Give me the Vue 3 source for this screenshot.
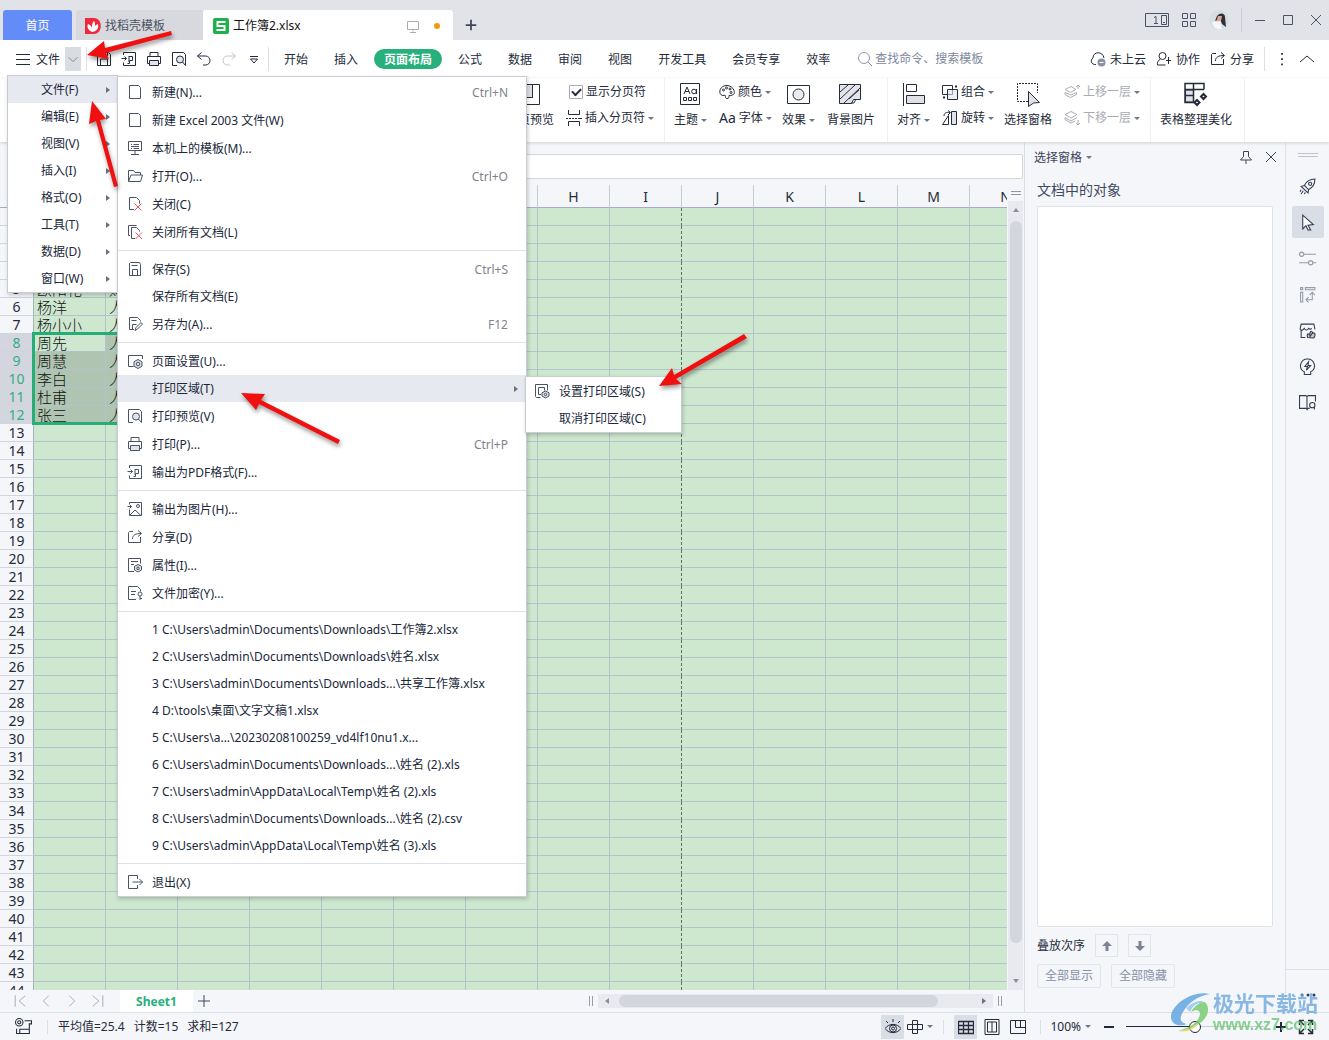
<script setup>
import { h, ref } from 'vue'

const icons = {
  page: '<path d="M2.500 1.500h9l2 2v11h-11z"/>',
  template: '<path d="M1.500 1.500h13v9h-13zM8 10.500v3.500M4 14.500h8M4 4.500h1M6.500 4.500h5.500M4 6.500h8M4 8.500h1M6.500 8.500h5.500"/>',
  folder: '<path d="M1.500 13.500v-11h5l1.500 2h5.500v2.500M1.500 13.500l2.500-6.500h11.500l-2 6.500z"/>',
  close: '<path d="M7 13.500H2.500v-12h7l3 3v3"/><path stroke="#e05a5a" d="M7.500 7.500l7 7M14.500 7.500l-7 7"/>',
  closeAll: '<path d="M3 11.500H1.500v-10h8M8 14.500H4.500v-11h5l3 3v1"/><path stroke="#e05a5a" d="M8.500 8.500l6.500 6.500M15 8.500l-6.500 6.500"/>',
  save: '<path d="M2.500 14.500v-12l1-1h9l1 2v11zM4.500 4.500h6M5.500 14.500v-6h5v6"/>',
  saveAs: '<path d="M7 13.500H2.500v-12h8l3 3v1M4.500 4.500h5M5.500 13.500v-5h4M8 14.500l1-3 5-5 1.500 1.500-5 5z"/>',
  quickSave: '<path d="M1.500 14.500v-13h11l2 2v11zM4.500 1.500v3h7v-3M4.500 14.500v-6.500h7v6.500"/>',
  pageSetup: '<path d="M6.500 13.500h-5v-11h14v3.500"/><path fill="#dfe4ee" d="M11 6.500l4 2.200v4.600L11 15.500l-4-2.200V8.700z"/><circle cx="11" cy="11" r="1.800"/>',
  preview: '<path d="M6 14.500H1.500v-13h11l2 2v11"/><circle cx="9" cy="8.500" r="3.500" fill="#dfe4ee"/><path d="M11.500 11l3 3.500"/>',
  print: '<path d="M4 5.500v-4h8v4M3.500 12.500h-2v-7h13v7h-2"/><path fill="#dfe4ee" d="M3.500 9.500h9v5h-9z"/>',
  pdf: '<path d="M2.500 4v-2.500h12v13h-12v-3M.5 7.500h5M3.500 5.500l2 2-2 2M7.500 5.500h4v4h-3v3h-2M8 6v5"/>',
  image: '<path d="M2.500 3v-1.500h12v13h-12v-6M.5 5.500h4M2.500 3.500l2 2-2 2M3 14l5-5 6 5.500"/><circle cx="11" cy="5" r="1.500"/>',
  share: '<path d="M6 2.500H2.500l-1 1v10h12V8M5.500 10c0-4 3-5.500 8.500-5.500M11 1.500l3.500 3-3.500 3"/>',
  props: '<path d="M7 14.500H1.500v-13h12v5M4 4.500h7M4 7.500h3"/><path fill="#dfe4ee" d="M11 7.500l3.500 1.800v3.700L11 15l-3.500-2V9.300z"/><circle cx="11" cy="11.300" r="1.300"/>',
  lock: '<path d="M9 14.500H1.500v-13h9l3 3v2M4 6.500h5M4 9.500h4"/><circle cx="13" cy="9" r="2"/><path d="M13 11v4M13 13.500h2"/>',
  exit: '<path d="M10.500 5V1.500h-9v13h9V11M5.500 8h10M12.500 5l3 3-3 3"/>',
  area: '<path d="M6.500 14.500h-4l-1-1v-12h12v6"/><path d="M4.500 11.500v-7h6v3M4.500 11.500h2.500"/><path fill="#dfe4ee" d="M11.500 8l3.500 1.800v3.200l-3.500 2-3.500-2V9.800z"/><circle cx="11.500" cy="11.500" r="1.200"/>',
  undo: '<path d="M5.500 1.500l-4 3.500 4 3.500M1.500 5h8c6 0 6 9 0 9H7"/>',
  redo: '<path d="M10.500 1.500l4 3.500-4 3.500M14.500 5h-8c-6 0-6 9 0 9H9"/>',
  more: '<path d="M4 5.500h8M4.500 8h7l-3.500 4z"/>',
  menu: '<path d="M1 3.500h14M1 8.500h14M1 13.500h14"/>',
  down: '<path d="M3 6l5 5 5-5"/>',
  up: '<path d="M1 11l7-6 7 6"/>',
  plus: '<path d="M8 2v12M2 8h12"/>',
  search: '<circle cx="7" cy="7" r="5.500"/><path d="M11 11l4 4"/>',
  cloud: '<path d="M6 13.500C1 14 0 9 3 7c0-7 10-7 11 0"/><circle cx="11.500" cy="11.500" r="4" fill="#8b91a3" stroke="none"/><path stroke="#fff" d="M9.500 11.500h4"/>',
  people: '<circle cx="6.500" cy="5" r="3.500"/><path d="M4 8.500c-2 1-3 3-2.500 5.500h8M12.500 6v7M10 9.500h5"/>',
  dots: '<path stroke-width="2" d="M8 1v2M8 7v2M8 13v2"/>',
  apps: '<path d="M1.500 1.500h5v5h-5zM9.500 1.500h5v5h-5zM1.500 9.500h5v5h-5zM9.500 9.500h5v5h-5z"/>',
  min: '<path d="M3 8.500h10"/>',
  max: '<path d="M3.500 3.500h9v9h-9z"/>',
  x: '<path d="M3 3l10 10M13 3L3 13"/>',
  screen: '<path d="M2.500 3.500h11v8h-11zM8 11.500v2M5 14.500h6"/>',
  pin: '<path d="M5.500 2.500h5v5l3 3.500h-11l3-3.500zM8 11v4"/>',
  first: '<path d="M2.500 1.500v13M14 2L7 8l7 6"/>',
  prev: '<path d="M11 2L5 8l6 6"/>',
  next: '<path d="M5 2l6 6-6 6"/>',
  last: '<path d="M13.500 1.500v13M2 2l7 6-7 6"/>',
  break: '<path d="M2.500 0v4.500h11V0M2.500 16v-4.500h11V16M0 8.500h2M3 8.500h2M6 8.500h2M9 8.500h2M12 8.500h4"/>',
  palette: '<path d="M8 1.500c-9 0-9 11-3 10 3-1 0 3 3 3 2 0 2-1 2-3 5 0 6-2 5-5-1-3-4-5-7-5z"/><circle cx="4.500" cy="6" r="1"/><circle cx="7.500" cy="4" r="1"/><circle cx="11" cy="5" r="1"/><circle cx="12" cy="8.500" r="1"/>',
  group: '<path d="M.5 1.500h10v9H.5z"/><path fill="#dfe4ee" fill-opacity=".6" d="M5.500 5.500h10v10h-10z"/><path stroke-width="2" d="M13 2.500h2M1 13.500h2"/>',
  rotate: '<path d="M.5 14.500l6-9v9zM2 6c0-3 2-4 6-3.500M6 .5l2.500 2L6 5"/><path fill="#dfe4ee" d="M9.500 1.500h5v13h-5z"/>',
  layerUp: '<path d="M1 5.500l6-3 5 3-5.500 3zM1 8.500v2l5.500 3 6-3v-2L7 11zM14 5V1M12 3l2-2 2 2"/>',
  layerDown: '<path d="M1 4.500l6-3 6 3-6 3.500zM1 7.500v2l6 3.500 4-2M13 7.500L7 11 1 7.500M14 10v5M12 13l2 2 2-2"/>',
  rocket: '<path d="M5 7c2-4 5-6 10-6 0 5-2 8-6 10zM5 7l-3 1 6.500 6L9 11M2 11l-1 2M4 12l-2 3M6 13.500L5 15"/><circle cx="10.500" cy="5.500" r="1.500"/>',
  pointer: '<path fill="#fff" d="M3.500 1l10 9-5 .5L11 15H8.500l-2-4-3 3z"/>',
  sliders: '<circle cx="2.500" cy="4" r="2"/><path d="M4.500 4H16M0 12h9M13 12h3"/><circle cx="11" cy="12" r="2"/>',
  transfer: '<path d="M1.500 1.500h2v2h-2zM6 1.500h9v2H6zM1.500 6h2v9h-2zM12.500 7v6h-6M10 8.500L12.500 6 15 8.500M9 10.500L6.500 13 9 15.500"/>',
  store: '<path d="M2 7v7.500h4M1 7l1-5h12l1 5M1 7c2 2 3 0 4-1 1 2 3 2 4 0 1 1 2 1 3 0"/><path fill="currentColor" fill-opacity=".25" d="M8 14.500c-1-4 1-4 2-2 0-4 2-5 3-2 2-1 3 1 1 4.500zM10 14l3-4"/>',
  bulb: '<path d="M5 13c-6-3-4-12 3-12s9 9 3 12v2.500H5zM9 3.500L5.500 8H8l-1 3.500L11 7H8.500z"/>',
  book: '<path d="M.5 1.500h6l1 1v12l-1-1h-6zM7.500 2.500l1-1h7V7M7.500 14.500l1-1H10"/><circle cx="12.500" cy="10.500" r="2.500"/><path d="M14.500 12v2.500"/>',
  macro: '<circle cx="4" cy="4" r="3.500"/><circle cx="4" cy="4" r="1.500"/><path d="M9 2.500h6.500v3h-2v9h-9v-4h9M1.500 10v4.500h3"/>',
  eye: '<path d="M0 9.500C4 4 12 4 16 9.500c-4 5.500-12 5.500-16 0zM8 0v3M1 2l2 2M15 2l-2 2"/><circle cx="8" cy="9.500" r="3.500"/><circle cx="8" cy="9.500" r="1.500"/>',
  cross: '<path d="M5.500 1.500h5v13h-5zM.5 5.500h15v5H.5z"/>',
  grid: '<path stroke-width="1.300" d="M.5 2.500h15v12H.5zM.5 6.500h15M.5 10.500h15M5.500 2.500v12M10.500 2.500v12"/>',
  layout: '<path d="M1 .5h14v15H1zM3.500 3h9v10h-9zM8 3v10"/>',
  split: '<path d="M.5 1.500h15v13H.5zM5.500 1.500v7h10M10.500 1.500v7"/>',
  full: '<path stroke-width="1.500" d="M6 1.500H1.500V6M1.500 1.500L6 6M10 1.500h4.500V6M14.500 1.500L10 6M1.500 10v4.500H6M1.500 14.500L6 10M14.500 10v4.500H10M14.500 14.500L10 10"/>',
  arrowUp: '<path fill="currentColor" stroke="none" d="M8 3l5 5H9.500v5h-3V8H3z"/>',
  arrowDown: '<path fill="currentColor" stroke="none" d="M8 13L3 8h3.500V3h3v5H13z"/>',
  bigPreview: '<path d="M1.500 2.500h20v20h-20z"/><path fill="#dfe1e6" d="M1.500 2.500h13v13h-13z"/><path d="M14.500 15.500v-13"/>',
  bigTheme: '<path d="M2.500 1.500h19v21h-19zM5.500 15.500h3v3h-3zM10.500 15.500h3v3h-3zM15.500 15.500h3v3h-3zM6 12l3-7 3 7M7 9.500h4"/><circle cx="16" cy="9.500" r="2.300"/><path d="M18.500 7v5"/>',
  bigEffect: '<path d="M1.500 3.500h22v18h-22z"/><circle cx="12.500" cy="12.500" r="5.500" fill="#e8ebf0"/>',
  bigBack: '<path fill="#e3e5ea" d="M1.500 2.500h21v15h-7l-2 4h-12z"/><path d="M2 10l8-7M2 17L17 3M6 21L22 6M13 21h3l2-4M11 17l10-9"/>',
  bigAlign: '<path d="M2.500 1v23M5.500 2.500h10v7h-10z"/><path fill="#dfe1e6" d="M5.500 13.500h18v8h-18z"/>',
  bigSelect: '<path stroke-dasharray="2 1" d="M13 19.500H2.500v-18h20V11"/><path fill="#dfe1e6" d="M13.500 9.500l11 11-6 .5-5 3.500z"/>',
  bigTable: '<path fill="#dfe1e6" d="M2.500 8h8v12h-8z"/><path stroke-width="1.500" d="M21 7.500v-6H2v19h8.500v-19M2 7.500h19M2 13.500h8.500"/><path stroke-width="2" d="M14 18l2.500 2.500L14 23l-2.500-2.500zM20.500 12l2.500 2.500-2.500 2.500-2.500-2.500z"/>',
}
const Ico = (p) => h('svg', {
  width: p.s || 16, height: p.s || 16, viewBox: p.s > 24 ? '0 0 25 25' : '0 0 16 16',
  fill: 'none', stroke: 'currentColor', 'aria-hidden': 'true', innerHTML: icons[p.n],
})
Ico.props = ['n', 's']

const mainMenu = ['文件(F)', '编辑(E)', '视图(V)', '插入(I)', '格式(O)', '工具(T)', '数据(D)', '窗口(W)']
const fileMenu = [
  [
    { t: '新建(N)...', i: 'page', k: 'Ctrl+N' },
    { t: '新建 Excel 2003 文件(W)', i: 'page' },
    { t: '本机上的模板(M)...', i: 'template' },
    { t: '打开(O)...', i: 'folder', k: 'Ctrl+O' },
    { t: '关闭(C)', i: 'close' },
    { t: '关闭所有文档(L)', i: 'closeAll' },
  ],
  [
    { t: '保存(S)', i: 'save', k: 'Ctrl+S' },
    { t: '保存所有文档(E)' },
    { t: '另存为(A)...', i: 'saveAs', k: 'F12' },
  ],
  [
    { t: '页面设置(U)...', i: 'pageSetup' },
    { t: '打印区域(T)', sub: true },
    { t: '打印预览(V)', i: 'preview' },
    { t: '打印(P)...', i: 'print', k: 'Ctrl+P' },
    { t: '输出为PDF格式(F)...', i: 'pdf' },
  ],
  [
    { t: '输出为图片(H)...', i: 'image' },
    { t: '分享(D)', i: 'share' },
    { t: '属性(I)...', i: 'props' },
    { t: '文件加密(Y)...', i: 'lock' },
  ],
  [
    '1 C:\\Users\\admin\\Documents\\Downloads\\工作簿2.xlsx',
    '2 C:\\Users\\admin\\Documents\\Downloads\\姓名.xlsx',
    '3 C:\\Users\\admin\\Documents\\Downloads...\\共享工作簿.xlsx',
    '4 D:\\tools\\桌面\\文字文稿1.xlsx',
    '5 C:\\Users\\a...\\20230208100259_vd4lf10nu1.x...',
    '6 C:\\Users\\admin\\Documents\\Downloads...\\姓名 (2).xls',
    '7 C:\\Users\\admin\\AppData\\Local\\Temp\\姓名 (2).xls',
    '8 C:\\Users\\admin\\Documents\\Downloads...\\姓名 (2).csv',
    '9 C:\\Users\\admin\\AppData\\Local\\Temp\\姓名 (3).xls',
  ].map((t) => ({ t })),
  [{ t: '退出(X)', i: 'exit' }],
]
const ribbonTabs = ['开始', '插入', '页面布局', '公式', '数据', '审阅', '视图', '开发工具', '会员专享', '效率']
const columns = 'ABCDEFGHIJKLMN'.split('')
const names = { 5: ['欧阳花', '财务'], 6: ['杨洋', '人事'], 7: ['杨小小', '人事'], 8: ['周先', '人事'], 9: ['周慧', '人事'], 10: ['李白', '人事'], 11: ['杜甫', '人事'], 12: ['张三', '人事'] }
const picked = (r) => r >= 8 && r <= 12
const rail = ['rocket', 'pointer', 'sliders', 'transfer', 'store', 'bulb', 'book']
const zoom = ref(50)
const breaks = ref(true)
</script>

<template>
  <div class="app">
    <header class="titlebar">
      <button class="tab home">首页</button>
      <button class="tab docer">
        <svg width="16" height="16" viewBox="0 0 16 16" aria-hidden="true"><path fill="#f0283c" d="M0 0h9c9 0 9 16 0 16H0z" /><path fill="#fff" d="M7.500 14C2 12 2 8 3 6c3 1 4 3 4 5 0-4 0-6 2-8 2 3 1 6 0 8 0-2 1-4 4-5 1 4-1 7-5.500 8z" /></svg>
        <span>找稻壳模板</span>
      </button>
      <button class="tab workbook">
        <svg width="16" height="16" viewBox="0 0 16 16" aria-hidden="true"><rect width="16" height="16" rx="2" fill="#1fb14c" /><path fill="none" stroke="#fff" stroke-width="2" d="M12.500 4H4.500v4h7v4H3.500" /></svg>
        <span>工作簿2.xlsx</span>
        <Ico n="screen" class="screen" /><i class="dirty"></i>
      </button>
      <button class="ib newtab" aria-label="新建标签"><Ico n="plus" s="14" /></button>
      <div class="window">
        <svg width="24" height="16" viewBox="0 0 24 16" fill="none" stroke="currentColor" aria-hidden="true"><path d="M.5 1.500h23v13H.5zM16.500 3.500h5v9h-5zM18 10.500h2M9 5.500l2-1v7M9 11.500h4" /></svg>
        <Ico n="apps" />
        <svg class="avatar" width="20" height="20" viewBox="0 0 20 20" aria-hidden="true"><circle cx="10" cy="10" r="10" fill="#d5dfe1" /><path fill="#343039" d="M8 6c3-4 8-3 8 1l1 10-4-3-2-5-5 2z" /><path fill="#d8a89a" d="M9 6h4l-1 5-5 2z" /><path fill="#f4f7f7" d="M3 12l8-1 2 8c-6 1-9-2-10-7z" /></svg>
        <i class="vline"></i>
        <button class="ib" aria-label="最小化"><Ico n="min" /></button>
        <button class="ib" aria-label="最大化"><Ico n="max" /></button>
        <button class="ib" aria-label="关闭"><Ico n="x" /></button>
      </div>
    </header>

    <nav class="menubar">
      <button class="ib file"><Ico n="menu" /><span>文件</span></button>
      <button class="ib drop" aria-label="展开菜单"><Ico n="down" s="14" /></button>
      <i class="vline"></i>
      <div class="quick">
        <button v-for="n in ['quickSave', 'pdf', 'print', 'preview', 'undo', 'redo', 'more']" :key="n" class="ib" :class="n" :aria-label="n"><Ico :n="n" /></button>
      </div>
      <i class="vline"></i>
      <div class="tabs">
        <button v-for="t in ribbonTabs" :key="t" :class="{ on: t === '页面布局' }">{{ t }}</button>
      </div>
      <label class="search"><Ico n="search" /><input type="text" placeholder="查找命令、搜索模板" aria-label="查找命令" /></label>
      <div class="account">
        <button class="ib"><Ico n="cloud" /><span>未上云</span></button>
        <button class="ib"><Ico n="people" /><span>协作</span></button>
        <button class="ib"><Ico n="share" /><span>分享</span></button>
        <i class="vline"></i>
        <button class="ib" aria-label="更多"><Ico n="dots" s="14" /></button>
        <button class="ib" aria-label="收起功能区"><Ico n="up" /></button>
      </div>
    </nav>

    <section class="ribbon">
      <button class="big"><Ico n="bigPreview" s="25" /><span>分页预览</span></button>
      <div class="stack">
        <label class="row"><input v-model="breaks" type="checkbox" />显示分页符</label>
        <button class="row"><Ico n="break" />插入分页符<i class="caret"></i></button>
      </div>
      <i class="sep"></i>
      <button class="big"><Ico n="bigTheme" s="25" /><span>主题<i class="caret"></i></span></button>
      <div class="stack">
        <button class="row"><Ico n="palette" />颜色<i class="caret"></i></button>
        <button class="row"><b>Aa</b>字体<i class="caret"></i></button>
      </div>
      <button class="big"><Ico n="bigEffect" s="25" /><span>效果<i class="caret"></i></span></button>
      <button class="big"><Ico n="bigBack" s="25" /><span>背景图片</span></button>
      <i class="sep"></i>
      <button class="big"><Ico n="bigAlign" s="25" /><span>对齐<i class="caret"></i></span></button>
      <div class="stack">
        <button class="row"><Ico n="group" />组合<i class="caret"></i></button>
        <button class="row"><Ico n="rotate" />旋转<i class="caret"></i></button>
      </div>
      <button class="big"><Ico n="bigSelect" s="25" /><span>选择窗格</span></button>
      <div class="stack off">
        <button class="row"><Ico n="layerUp" />上移一层<i class="caret"></i></button>
        <button class="row"><Ico n="layerDown" />下移一层<i class="caret"></i></button>
      </div>
      <i class="sep"></i>
      <button class="big"><Ico n="bigTable" s="25" /><span>表格整理美化</span></button>
      <i class="sep"></i>
    </section>

    <main class="body">
      <section class="sheet">
        <div class="formula"><input type="text" aria-label="编辑栏" /></div>
        <div class="canvas">
          <div class="gridwrap">
            <table>
              <thead>
                <tr><th class="corner"></th><th v-for="c in columns" :key="c">{{ c }}</th></tr>
              </thead>
              <tbody>
                <tr v-for="r in 44" :key="r" :class="{ picked: picked(r) }">
                  <th>{{ r }}</th>
                  <td v-for="(c, i) in columns" :key="c" :class="{ shade: picked(r) && i < 3 && !(r === 8 && i === 0), pagebreak: c === 'I' }">{{ names[r]?.[i] }}<i v-if="r === 8 && i === 0" class="selection"></i></td>
                </tr>
              </tbody>
            </table>
          </div>
          <div class="vscroll">
            <i class="grip"></i>
            <div class="vtrack"><i class="tri t-up"></i><i class="vthumb"></i><i class="tri t-down"></i></div>
          </div>
        </div>
        <div class="sheetbar">
          <div class="pager">
            <button v-for="n in ['first', 'prev', 'next', 'last']" :key="n" class="ib" :aria-label="n"><Ico :n="n" s="14" /></button>
          </div>
          <button class="sheettab">Sheet1</button>
          <button class="ib addsheet" aria-label="新建工作表"><Ico n="plus" /></button>
          <div class="hscroll">
            <i class="bars"></i>
            <div class="htrack"><i class="tri t-left"></i><i class="hthumb"></i><i class="tri t-right"></i></div>
            <i class="bars"></i>
          </div>
        </div>
      </section>

      <aside class="pane">
        <div class="panehead">
          <button class="ib"><span>选择窗格</span><i class="caret"></i></button>
          <button class="ib pinbtn" aria-label="固定"><Ico n="pin" /></button>
          <button class="ib" aria-label="关闭窗格"><Ico n="x" /></button>
        </div>
        <h2>文档中的对象</h2>
        <div class="objects"></div>
        <div class="order">
          <span>叠放次序</span>
          <button aria-label="上移"><Ico n="arrowUp" /></button>
          <button aria-label="下移"><Ico n="arrowDown" /></button>
        </div>
        <div class="showhide"><button>全部显示</button><button>全部隐藏</button></div>
      </aside>

      <aside class="rail">
        <i class="grip"></i>
        <button v-for="n in rail" :key="n" :class="['ib', n]" :aria-label="n"><Ico :n="n" s="17" /></button>
        <div class="railend">
          <svg width="16" height="4" viewBox="0 0 16 4" fill="currentColor" aria-hidden="true"><circle cx="2" cy="2" r="1.500" /><circle cx="8" cy="2" r="1.500" /><circle cx="14" cy="2" r="1.500" /></svg>
        </div>
      </aside>
    </main>

    <footer class="status">
      <Ico n="macro" s="17" />
      <i class="vline"></i>
      <span class="sums"><span>平均值=25.4</span><span>计数=15</span><span>求和=127</span></span>
      <div class="views">
        <button class="ib on" aria-label="护眼模式"><Ico n="eye" /></button>
        <button class="ib" aria-label="阅读模式"><Ico n="cross" s="16" /><i class="caret"></i></button>
        <i class="vline"></i>
        <button class="ib on" aria-label="普通视图"><Ico n="grid" s="16" /></button>
        <button class="ib" aria-label="页面布局"><Ico n="layout" s="16" /></button>
        <button class="ib" aria-label="分页预览"><Ico n="split" /></button>
        <i class="vline"></i>
      </div>
      <div class="zoom">
        <button class="ib pct">100%<i class="caret"></i></button>
        <button class="ib" aria-label="缩小"><svg width="12" height="12" aria-hidden="true"><path stroke="#20283a" stroke-width="2" d="M1 6h10" /></svg></button>
        <input v-model="zoom" type="range" min="0" max="100" aria-label="缩放" />
        <button class="ib" aria-label="放大"><svg width="12" height="12" aria-hidden="true"><path stroke="#20283a" stroke-width="2" d="M1 6h10M6 1v10" /></svg></button>
        <button class="ib fs" aria-label="全屏"><Ico n="full" /></button>
      </div>
    </footer>

    <ul class="pop mainmenu">
      <li v-for="(m, i) in mainMenu" :key="m"><button :class="{ hot: i === 0 }">{{ m }}<i class="tri t-right"></i></button></li>
    </ul>

    <div class="pop filemenu">
      <ul v-for="(g, i) in fileMenu" :key="i">
        <li v-for="m in g" :key="m.t">
          <button :class="{ hot: m.sub, tall: m.i }">
            <span class="mi"><Ico v-if="m.i" :n="m.i" /></span><span class="mt">{{ m.t }}</span>
            <kbd v-if="m.k">{{ m.k }}</kbd><i v-if="m.sub" class="tri t-right"></i>
          </button>
        </li>
      </ul>
    </div>

    <ul class="pop submenu">
      <li><button class="tall"><span class="mi"><Ico n="area" /></span><span class="mt">设置打印区域(S)</span></button></li>
      <li><button><span class="mi"></span><span class="mt">取消打印区域(C)</span></button></li>
    </ul>

    <svg class="marks" width="760" height="460" aria-hidden="true">
      <g fill="#f01010">
        <path d="M87 55L104 41 105 48 171 31 172 35 106 53 109 59z" />
        <path d="M92 101L106 119 100 120 118 186 114 187 96 121 89 124z" />
        <path d="M659 386L672 368 674 375 744 334 747 338 676 379 682 384z" />
        <path d="M241 393L265 394 261 400 340 440 338 444 259 404 256 410z" />
      </g>
    </svg>

    <div class="brand">
      <svg width="44" height="42" viewBox="0 0 44 42" aria-hidden="true">
        <path fill="#5aa2df" d="M41 2C23-2 2 13 2 25c0 8 9 10 16 7-7-1-8-6-4-12C19 11 28 4 41 2z" />
        <path fill="#8cc6ee" d="M17 16c8-7 16-9 19-5-7-1-12 2-15 9z" />
        <path fill="#72c96a" d="M36 10c9 9-2 27-27 29 14-4 21-10 22-17 0-4-4-5-9-2 4-7 9-10 14-10z" />
        <path fill="#e9cf4d" d="M10 39c9-1 15-4 20-9-4 7-11 11-20 9z" />
      </svg>
      <div><strong>极光下载站</strong><em>www.xz7.com</em></div>
    </div>
  </div>
</template>

<style>
html, body { margin: 0; overflow: hidden; }
</style>

<style scoped>
.app {
  position: relative; display: flex; flex-direction: column; height: 100vh; overflow: hidden;
  font: 12px/18px "Noto Sans", "Noto Sans CJK SC", sans-serif; color: #252b3a; background: #f5f6f9;
}
.app * { box-sizing: border-box; }
button { border: 0; padding: 0; background: none; font: inherit; color: inherit; white-space: nowrap; }
input { font: inherit; color: inherit; }
ul { list-style: none; margin: 0; padding: 0; }
svg { flex: none; display: block; }
.ib { display: flex; align-items: center; justify-content: center; }
.ib > span { padding-top: 2px; }
.vline { flex: none; width: 1px; height: 24px; background: #dcdfe5; }
.caret { flex: none; display: inline-block; border: 3px solid transparent; border-top-color: #6f7685; border-bottom: 0; margin-left: 4px; vertical-align: middle; }
.tri { flex: none; width: 0; height: 0; border: 3px solid transparent; }
.t-right { border-left: 4px solid #6a7080; border-right: 0; }
.t-left { border-right: 4px solid #8a90a0; border-left: 0; }
.t-up { border-bottom: 4px solid #8a90a0; border-top: 0; }
.t-down { border-top: 4px solid #8a90a0; border-bottom: 0; }

.titlebar { flex: none; display: flex; align-items: flex-end; height: 40px; padding-left: 3px; background: #e2e3e8; }
.tab { display: flex; align-items: center; height: 30px; padding-top: 2px; border-radius: 3px 3px 0 0; }
.home { width: 69px; justify-content: center; background: #648cf8; color: #fff; margin-right: 4px; }
.docer { width: 127px; padding-left: 9px; gap: 4px; background: #d7d9de; color: #4c5263; }
.workbook { width: 250px; padding-left: 10px; padding-right: 13px; gap: 4px; background: #fff; color: #111; }
.screen { margin-left: auto; color: #a7abb6; }
.dirty { width: 6px; height: 6px; border-radius: 3px; background: #ee9a13; margin-left: 9px; }
.newtab { width: 36px; height: 30px; color: #3d4558; }
.newtab svg { stroke-width: 2; }
.window { margin-left: auto; height: 40px; display: flex; align-items: center; gap: 12px; padding-right: 5px; color: #4a5266; }
.window .vline { background: #cbced6; margin-right: -2px; }

.menubar { flex: none; display: flex; align-items: center; height: 38px; padding-left: 15px; background: #fff; }
.file { gap: 5px; margin-right: 5px; }
.drop { width: 16px; height: 24px; background: #d9dce1; color: #737a88; margin-right: 5px; }
.quick { display: flex; gap: 9px; padding: 0 6px 0 9px; }
.quick .redo { color: #c0c4cc; }
.tabs { display: flex; gap: 6px; padding-left: 5px; }
.tabs button { height: 20px; padding: 2px 10px 0; border-radius: 10px; }
.tabs .on { background: #27b07c; color: #fff; font-weight: 700; }
.search { display: flex; align-items: center; gap: 2px; margin-left: 17px; color: #9297a5; }
.search input { width: 130px; border: 0; padding: 0; outline: 0; }
.search input::placeholder { color: #8088a0; opacity: 1; }
.account { margin-left: auto; display: flex; align-items: center; gap: 10px; padding-right: 14px; }
.account .ib { gap: 4px; }

.ribbon { flex: none; display: flex; height: 64px; padding-left: 506px; background: #fff; box-shadow: 0 1px 3px #ccd0d6; z-index: 1; }
.big { display: flex; flex-direction: column; align-items: center; padding-top: 4px; margin-right: 12px; }
.big svg { margin-bottom: 4px; }
.big span { display: block; }
.big .caret { margin-left: 3px; }
.stack { display: flex; flex-direction: column; gap: 8px; padding-top: 5px; margin-right: 10px; }
.row { display: flex; align-items: center; gap: 3px; height: 18px; }
.row .caret { margin-left: 0; }
.row b { font-weight: 400; font-size: 14px; }
.row input { appearance: none; width: 14px; height: 14px; margin: 0 0 0 3px; border: 1px solid #a8adb8; border-radius: 1px; display: grid; place-items: center; }
.row input:checked::after { content: ""; width: 7px; height: 4px; margin-top: -3px; border: solid #252b3a; border-width: 0 0 2px 2px; transform: rotate(-45deg); }
.off { color: #a9acb3; }
.sep { flex: none; width: 1px; background: #eef0f3; margin-right: 9px; }

.body { flex: 1; min-height: 0; display: flex; }
.sheet { flex: 1; min-width: 0; display: flex; flex-direction: column; border-right: 1px solid #d9dce3; }
.formula { flex: none; display: flex; height: 43px; padding: 12px 1px 6px 190px; }
.formula input { flex: 1; min-width: 0; height: 25px; border: 1px solid #d3d6dd; border-radius: 2px; background: #fff; }
.canvas { flex: 1; min-height: 0; display: flex; }
.gridwrap { flex: 1; min-width: 0; overflow: hidden; background: #cde8cf; }
table { table-layout: fixed; width: 1042px; border-collapse: separate; border-spacing: 0; font-size: 15px; line-height: 17px; }
thead th { width: 72px; height: 23px; background: #f5f6f9; border-bottom: 1px solid #a5acc3; border-right: 1px solid #c7cbd6; }
thead .corner { width: 34px; }
th { height: 18px; padding: 0; font-size: 14px; font-weight: 400; background: #f5f6f9; border-right: 1px solid #a5b3c0; border-bottom: 1px solid #d0d4de; }
td { height: 18px; padding: 0 0 0 3px; overflow: hidden; white-space: nowrap; font-family: "Noto Sans CJK SC", sans-serif; font-weight: 300; color: #111; border-right: 1px solid #b5c2cb; border-bottom: 1px solid #b5c2cb; }
.pagebreak { border-right: 1px dashed #56705a; }
.picked th { background: #d3d6de; color: #36ab82; }
.picked td:nth-child(2) { position: relative; overflow: visible; }
.shade { background: #afc5b2; }
.selection { position: absolute; z-index: 1; left: -2px; top: -2px; width: 219px; height: 93px; border: 3px solid #27ad77; }
.vscroll { flex: none; width: 17px; display: flex; flex-direction: column; align-items: center; }
.grip { flex: none; display: block; width: 10px; height: 4px; border: solid #8f96a6; border-width: 1px 0; margin: 6px 0; }
.vtrack { flex: 1; min-height: 0; width: 15px; display: flex; flex-direction: column; align-items: center; padding: 7px 0 7px; background: #e9eaef; }
.vthumb { flex: 1; width: 12px; margin: 9px 0 36px; border-radius: 6px; background: #d3d6dc; }
.sheetbar { flex: none; display: flex; align-items: center; height: 22px; padding-left: 13px; }
.pager { display: flex; gap: 12px; color: #9da2af; margin-right: 15px; }
.sheettab { width: 73px; height: 22px; padding-top: 1px; background: #fff; color: #27b07c; font-weight: 700; }
.addsheet { margin-left: 3px; color: #3e465a; }
.hscroll { flex: 1; display: flex; align-items: center; justify-content: flex-end; gap: 5px; padding-right: 22px; }
.bars { width: 4px; height: 10px; border: solid #989eac; border-width: 0 1px; }
.htrack { width: 50%; display: flex; align-items: center; height: 14px; padding: 0 7px; background: #e9eaef; }
.hthumb { flex: 1; height: 12px; margin: 0 44px 0 10px; border-radius: 6px; background: #d3d6dc; }

.pane { flex: none; width: 261px; display: flex; flex-direction: column; padding: 0 12px 24px; border-right: 1px solid #dcdfe5; }
.panehead { display: flex; align-items: center; height: 30px; margin: 0 -6px 0 -3px; gap: 9px; color: #3c4459; }
.pinbtn { margin-left: auto; }
h2 { margin: 8px 0 6px; font-size: 14px; line-height: 20px; font-weight: 400; color: #414962; }
.objects { flex: 1; background: #fff; border: 1px solid #dfe2e8; border-radius: 2px; }
.order, .showhide { display: flex; align-items: center; gap: 10px; }
.order { margin: 7px 0; }
.order button { width: 23px; height: 23px; display: grid; place-items: center; border: 1px solid #e3e5eb; color: #7d8392; }
.showhide button { height: 24px; padding: 0 7px; border: 1px solid #e3e5eb; border-radius: 2px; color: #8790a7; }
.rail { flex: none; width: 43px; display: flex; flex-direction: column; align-items: center; gap: 4px; color: #333b50; }
.rail .grip { width: 20px; margin: 11px 0 9px; border-color: #bfc3cc; }
.rail .ib { width: 32px; height: 32px; }
.rail .pointer { background: #d9dde6; border-radius: 2px; }
.rail .sliders, .rail .transfer { color: #969ba8; }
.railend { margin-top: auto; width: 100%; height: 43px; border-top: 1px solid #dcdfe5; padding: 23px 14px 0; }

.status { flex: none; display: flex; align-items: center; height: 28px; padding: 0 15px; border-top: 1px solid #dcdfe5; }
.status > .vline { margin: 0 10px 0 15px; }
.status .vline { height: 14px; }
.sums { display: flex; gap: 9px; }
.views { margin-left: auto; display: flex; align-items: center; gap: 3px; margin-right: 9px; }
.views .ib { min-width: 23px; height: 24px; }
.views .on { background: #d9dde5; }
.views .vline { margin: 0 7px; }
.views .vline:last-child { margin: 0 0 0 8px; }
.zoom { display: flex; align-items: center; }
.pct { margin-right: 12px; }
.fs { margin-left: 11px; }
.zoom input { appearance: none; width: 150px; height: 14px; margin: 0 5px; background: linear-gradient(90deg, #20283a 50%, #c9cdd6 50%) center / 138px 1px no-repeat; }
.zoom input::-webkit-slider-thumb { appearance: none; width: 12px; height: 12px; border: 1px solid #20283a; border-radius: 6px; background: #fff; }

.pop { position: absolute; z-index: 3; background: #fff; border: 1px solid #c9ccd3; box-shadow: 1px 2px 4px #0003; }
.pop button { display: flex; align-items: center; width: 100%; height: 27px; text-align: left; color: #20283a; }
.pop .tall { height: 28px; }
.pop .tall .mt, .pop .tall kbd { padding-top: 2px; }
.pop .hot { background: #e6e9ef; }
.pop .tri { margin-left: auto; }
.mainmenu { left: 7px; top: 75px; width: 111px; }
.mainmenu button { padding: 0 7px 0 33px; }
.filemenu { left: 117px; top: 76px; width: 410px; padding-top: 1px; z-index: 4; }
.filemenu ul + ul { border-top: 1px solid #dfe1e6; margin-top: 4px; padding-top: 4px; }
.filemenu button { padding: 0 8px 0 9px; }
.mi { flex: none; width: 16px; margin-right: 9px; color: #4b5263; }
kbd { margin: 0 10px 0 auto; font: inherit; color: #80838b; }
.submenu { left: 525px; top: 376px; width: 157px; z-index: 5; }
.submenu button { padding-left: 8px; }
.marks { position: absolute; left: 0; top: 0; z-index: 6; pointer-events: none; filter: drop-shadow(1px 3px 2px #0006); }
.brand { position: absolute; z-index: 2; right: 11px; bottom: 5px; display: flex; align-items: center; pointer-events: none; opacity: .8; }
.brand strong { display: block; font-size: 21px; line-height: 24px; color: #6ea8e0; }
.brand em { display: block; font: 700 16px/20px "Liberation Sans", sans-serif; color: #6cc578; }
</style>
